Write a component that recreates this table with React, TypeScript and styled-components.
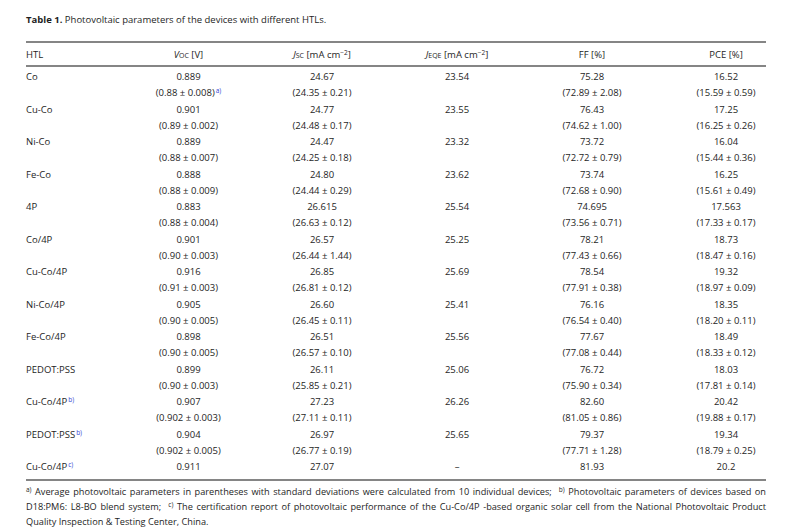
import React from "react";
import styled, { createGlobalStyle } from "styled-components";

const GlobalStyle = createGlobalStyle`
    body {
        margin: 0;
        background: #ffffff;
        font-family: "Open Sans", "Noto Sans", sans-serif;
        color: #1e1e1e;
    }
`;

const COLS = "96px 133px 134px 136px 134px 107px";

const Page = styled.div`
    width: 740px;
    padding: 13px 0 0 26px;
`;

const Caption = styled.div`
    font-size: 9.5px;
    line-height: 14px;
    margin-bottom: 14px;
    b {
        font-weight: 700;
    }
`;

const Table = styled.div`
    border-top: 2px solid #858585;
    border-bottom: 2px solid #858585;
    font-size: 9.5px;
`;

const HeadRow = styled.div`
    display: grid;
    grid-template-columns: ${COLS};
    height: 22px;
    align-items: center;
    border-bottom: 2px solid #858585;
`;

const Body = styled.div`
    padding: 2px 0 4px;
`;

const Row = styled.div`
    display: grid;
    grid-template-columns: ${COLS};
    line-height: 16.25px;
`;

const Cell = styled.div<{ $left?: boolean }>`
    text-align: ${(p) => (p.$left ? "left" : "center")};
    white-space: nowrap;
    &:last-child {
        padding-left: 27px;
    }
`;

const Line = styled.div``;

const Sym = styled.i`
    font-family: "Open Sans", sans-serif;
`;

const Sub = styled.span`
    font-size: 7px;
    text-transform: uppercase;
`;

const Sup = styled.sup`
    font-size: 6.5px;
    vertical-align: 3px;
    line-height: 0;
`;

const Note = styled.sup`
    font-size: 6.5px;
    vertical-align: 3px;
    line-height: 0;
    color: #3147d4;
    margin-left: 1px;
`;

const Foot = styled.div`
    font-size: 9.2px;
    line-height: 15px;
    padding-top: 3px;
`;

const FootLine = styled.div<{ $last?: boolean }>`
    text-align: ${(p) => (p.$last ? "left" : "justify")};
    text-align-last: ${(p) => (p.$last ? "left" : "justify")};
    white-space: nowrap;
`;

type Entry = [string, string?];

type DataRow = {
    htl: string;
    note?: string;
    voc: Entry;
    jsc: Entry;
    jeqe: string;
    ff: Entry;
    pce: Entry;
    vocNote?: string;
};

const rows: DataRow[] = [
    { htl: "Co", voc: ["0.889", "(0.88 ± 0.008)"], vocNote: "a)", jsc: ["24.67", "(24.35 ± 0.21)"], jeqe: "23.54", ff: ["75.28", "(72.89 ± 2.08)"], pce: ["16.52", "(15.59 ± 0.59)"] },
    { htl: "Cu-Co", voc: ["0.901", "(0.89 ± 0.002)"], jsc: ["24.77", "(24.48 ± 0.17)"], jeqe: "23.55", ff: ["76.43", "(74.62 ± 1.00)"], pce: ["17.25", "(16.25 ± 0.26)"] },
    { htl: "Ni-Co", voc: ["0.889", "(0.88 ± 0.007)"], jsc: ["24.47", "(24.25 ± 0.18)"], jeqe: "23.32", ff: ["73.72", "(72.72 ± 0.79)"], pce: ["16.04", "(15.44 ± 0.36)"] },
    { htl: "Fe-Co", voc: ["0.888", "(0.88 ± 0.009)"], jsc: ["24.80", "(24.44 ± 0.29)"], jeqe: "23.62", ff: ["73.74", "(72.68 ± 0.90)"], pce: ["16.25", "(15.61 ± 0.49)"] },
    { htl: "4P", voc: ["0.883", "(0.88 ± 0.004)"], jsc: ["26.615", "(26.63 ± 0.12)"], jeqe: "25.54", ff: ["74.695", "(73.56 ± 0.71)"], pce: ["17.563", "(17.33 ± 0.17)"] },
    { htl: "Co/4P", voc: ["0.901", "(0.90 ± 0.003)"], jsc: ["26.57", "(26.44 ± 1.44)"], jeqe: "25.25", ff: ["78.21", "(77.43 ± 0.66)"], pce: ["18.73", "(18.47 ± 0.16)"] },
    { htl: "Cu-Co/4P", voc: ["0.916", "(0.91 ± 0.003)"], jsc: ["26.85", "(26.81 ± 0.12)"], jeqe: "25.69", ff: ["78.54", "(77.91 ± 0.38)"], pce: ["19.32", "(18.97 ± 0.09)"] },
    { htl: "Ni-Co/4P", voc: ["0.905", "(0.90 ± 0.005)"], jsc: ["26.60", "(26.45 ± 0.11)"], jeqe: "25.41", ff: ["76.16", "(76.54 ± 0.40)"], pce: ["18.35", "(18.20 ± 0.11)"] },
    { htl: "Fe-Co/4P", voc: ["0.898", "(0.90 ± 0.005)"], jsc: ["26.51", "(26.57 ± 0.10)"], jeqe: "25.56", ff: ["77.67", "(77.08 ± 0.44)"], pce: ["18.49", "(18.33 ± 0.12)"] },
    { htl: "PEDOT:PSS", voc: ["0.899", "(0.90 ± 0.003)"], jsc: ["26.11", "(25.85 ± 0.21)"], jeqe: "25.06", ff: ["76.72", "(75.90 ± 0.34)"], pce: ["18.03", "(17.81 ± 0.14)"] },
    { htl: "Cu-Co/4P", note: "b)", voc: ["0.907", "(0.902 ± 0.003)"], jsc: ["27.23", "(27.11 ± 0.11)"], jeqe: "26.26", ff: ["82.60", "(81.05 ± 0.86)"], pce: ["20.42", "(19.88 ± 0.17)"] },
    { htl: "PEDOT:PSS", note: "b)", voc: ["0.904", "(0.902 ± 0.005)"], jsc: ["26.97", "(26.77 ± 0.19)"], jeqe: "25.65", ff: ["79.37", "(77.71 ± 1.28)"], pce: ["19.34", "(18.79 ± 0.25)"] },
    { htl: "Cu-Co/4P", note: "c)", voc: ["0.911"], jsc: ["27.07"], jeqe: "–", ff: ["81.93"], pce: ["20.2"] },
];

const Pair: React.FC<{ v: Entry; note?: string }> = ({ v, note }) => (
    <Cell>
        <Line>{v[0]}</Line>
        {v[1] && (
            <Line>
                {v[1]}
                {note && <Note>{note}</Note>}
            </Line>
        )}
    </Cell>
);

const App: React.FC = () => {
    return (
        <Page>
            <GlobalStyle />
            <Caption>
                <b>Table 1.</b> Photovoltaic parameters of the devices with different HTLs.
            </Caption>
            <Table>
                <HeadRow>
                    <Cell $left>HTL</Cell>
                    <Cell>
                        <Sym>V</Sym>
                        <Sub>oc</Sub> [V]
                    </Cell>
                    <Cell>
                        <Sym>J</Sym>
                        <Sub>sc</Sub> [mA cm<Sup>−2</Sup>]
                    </Cell>
                    <Cell>
                        <Sym>J</Sym>
                        <Sub>eqe</Sub> [mA cm<Sup>−2</Sup>]
                    </Cell>
                    <Cell>FF [%]</Cell>
                    <Cell>PCE [%]</Cell>
                </HeadRow>
                <Body>
                    {rows.map((r, i) => (
                        <Row key={i}>
                            <Cell $left>
                                {r.htl}
                                {r.note && <Note>{r.note}</Note>}
                            </Cell>
                            <Pair v={r.voc} note={r.vocNote} />
                            <Pair v={r.jsc} />
                            <Cell>{r.jeqe}</Cell>
                            <Pair v={r.ff} />
                            <Pair v={r.pce} />
                        </Row>
                    ))}
                </Body>
            </Table>
            <Foot>
                <FootLine>
                    <Sup>a)</Sup> Average photovoltaic parameters in parentheses with standard deviations were calculated from 10 individual devices;&nbsp; <Sup>b)</Sup> Photovoltaic parameters of devices based on
                </FootLine>
                <FootLine>
                    D18:PM6: L8-BO blend system;&nbsp; <Sup>c)</Sup> The certification report of photovoltaic performance of the Cu-Co/4P -based organic solar cell from the National Photovoltaic Product
                </FootLine>
                <FootLine $last>Quality Inspection &amp; Testing Center, China.</FootLine>
            </Foot>
        </Page>
    );
};

export default App;
